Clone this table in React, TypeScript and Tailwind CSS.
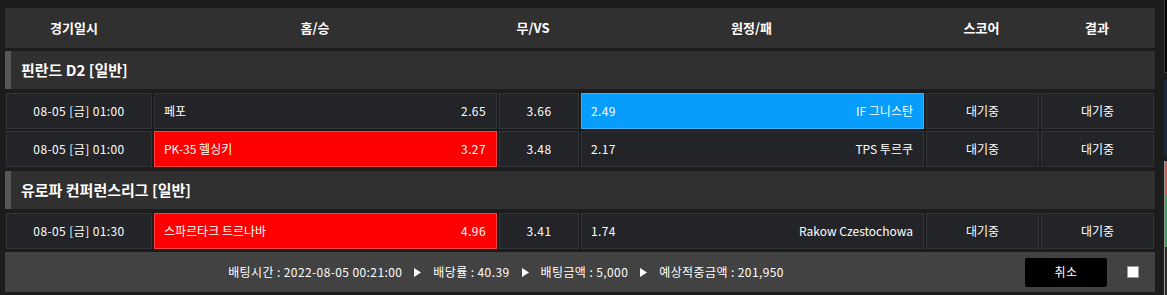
import React from 'react';

const FONT = { fontFamily: '"Noto Sans CJK KR", "Noto Sans", sans-serif' };

type Pick = 'home' | 'away' | null;

const leagues: { name: string; games: { date: string; home: string; homeOdd: string; draw: string; awayOdd: string; away: string; pick: Pick }[] }[] = [
  {
    name: '핀란드 D2 [일반]',
    games: [
      { date: '08-05 [금] 01:00', home: '페포', homeOdd: '2.65', draw: '3.66', awayOdd: '2.49', away: 'IF 그니스탄', pick: 'away' },
      { date: '08-05 [금] 01:00', home: 'PK-35 헬싱키', homeOdd: '3.27', draw: '3.48', awayOdd: '2.17', away: 'TPS 투르쿠', pick: 'home' },
    ],
  },
  {
    name: '유로파 컨퍼런스리그 [일반]',
    games: [
      { date: '08-05 [금] 01:30', home: '스파르타크 트르나바', homeOdd: '4.96', draw: '3.41', awayOdd: '1.74', away: 'Rakow Czestochowa', pick: 'home' },
    ],
  },
];

const cell = 'h-full flex items-center border border-[#333438] bg-[#232428]';

function Arrow() {
  return (
    <svg width="7" height="9" viewBox="0 0 7 9" className="mx-3">
      <polygon points="0,0 7,4.5 0,9" fill="#ffffff" />
    </svg>
  );
}

export default function App() {
  return (
    <div className="w-[1167px] h-[295px] bg-[#1c1c1c] flex overflow-hidden text-white" style={FONT}>
      <div className="w-[1150px] ml-[5px] pt-[8px] flex flex-col">
        {/* column headers */}
        <div className="h-[40px] bg-[#303030] flex items-center text-[13px] font-bold rounded-tr-[2px]">
          <div className="w-[138px] text-center">경기일시</div>
          <div className="w-[344px] text-center">홈/승</div>
          <div className="w-[92px] text-center">무/VS</div>
          <div className="w-[345px] text-center">원정/패</div>
          <div className="w-[115px] text-center">스코어</div>
          <div className="w-[116px] text-center">결과</div>
        </div>

        {leagues.map((lg, li) => (
          <div key={li} className={li === 0 ? 'mt-[3px]' : 'mt-[4px]'}>
            <div className="h-[38px] bg-[#303030] flex items-center">
              <div className="w-[6px] h-full bg-[#575757]" />
              <div className="pl-[10px] text-[15px] font-bold">{lg.name}</div>
            </div>
            <div className="mt-[4px] flex flex-col gap-[2px] px-[1px]">
              {lg.games.map((g, gi) => (
                <div key={gi} className="h-[36px] flex gap-[2px] text-[12px]">
                  <div className={`${cell} w-[146px] justify-center tracking-[0.4px]`}>{g.date}</div>
                  <div
                    className={`h-full w-[343px] flex items-center justify-between pl-[9px] pr-[10px] border ${
                      g.pick === 'home' ? 'bg-[#ff0000] border-[#ff4040]' : 'bg-[#232428] border-[#333438]'
                    }`}
                  >
                    <span>{g.home}</span>
                    <span className="tracking-[0.4px]">{g.homeOdd}</span>
                  </div>
                  <div className={`${cell} w-[80px] justify-center tracking-[0.4px]`}>{g.draw}</div>
                  <div
                    className={`h-full w-[343px] flex items-center justify-between pl-[9px] pr-[10px] border ${
                      g.pick === 'away' ? 'bg-[#069dfd] border-[#3cb2ff]' : 'bg-[#232428] border-[#333438]'
                    }`}
                  >
                    <span className="tracking-[0.4px]">{g.awayOdd}</span>
                    <span>{g.away}</span>
                  </div>
                  <div className={`${cell} w-[113px] justify-center`}>대기중</div>
                  <div className={`${cell} w-[113px] justify-center`}>대기중</div>
                </div>
              ))}
            </div>
          </div>
        ))}

        {/* betting summary */}
        <div className="mt-[3px] h-[40px] bg-[#424242] flex items-center text-[12px] tracking-[0.4px]">
          <div className="flex-1 flex items-center justify-center pr-[18px]">
            <span>배팅시간 : 2022-08-05 00:21:00</span>
            <Arrow />
            <span>배당률 : 40.39</span>
            <Arrow />
            <span>배팅금액 : 5,000</span>
            <Arrow />
            <span>예상적중금액 : 201,950</span>
          </div>
          <button className="w-[82px] h-[29px] bg-black rounded-[2px] text-[12px] text-white">취소</button>
          <div className="w-[12px] h-[12px] bg-white border border-[#9a9a9a] ml-[20px] mr-[16px]" />
        </div>
      </div>

      {/* edge of neighbouring panel */}
      <div className="ml-[9px] w-[3px] flex flex-col">
        <div className="h-[73px] bg-black border-l border-b border-[#3a3a3a]" />
        <div className="mt-[7px] h-[76px] bg-[#1d2836]" />
        <div className="mt-[5px] flex-1 border-l border-[#9a9a9a] flex flex-col">
          <div className="h-[34px] bg-[#d9534f]" />
          <div className="h-[52px] bg-[#2fa35a]" />
          <div className="flex-1 bg-[#2a2a2a]" />
        </div>
      </div>
    </div>
  );
}
